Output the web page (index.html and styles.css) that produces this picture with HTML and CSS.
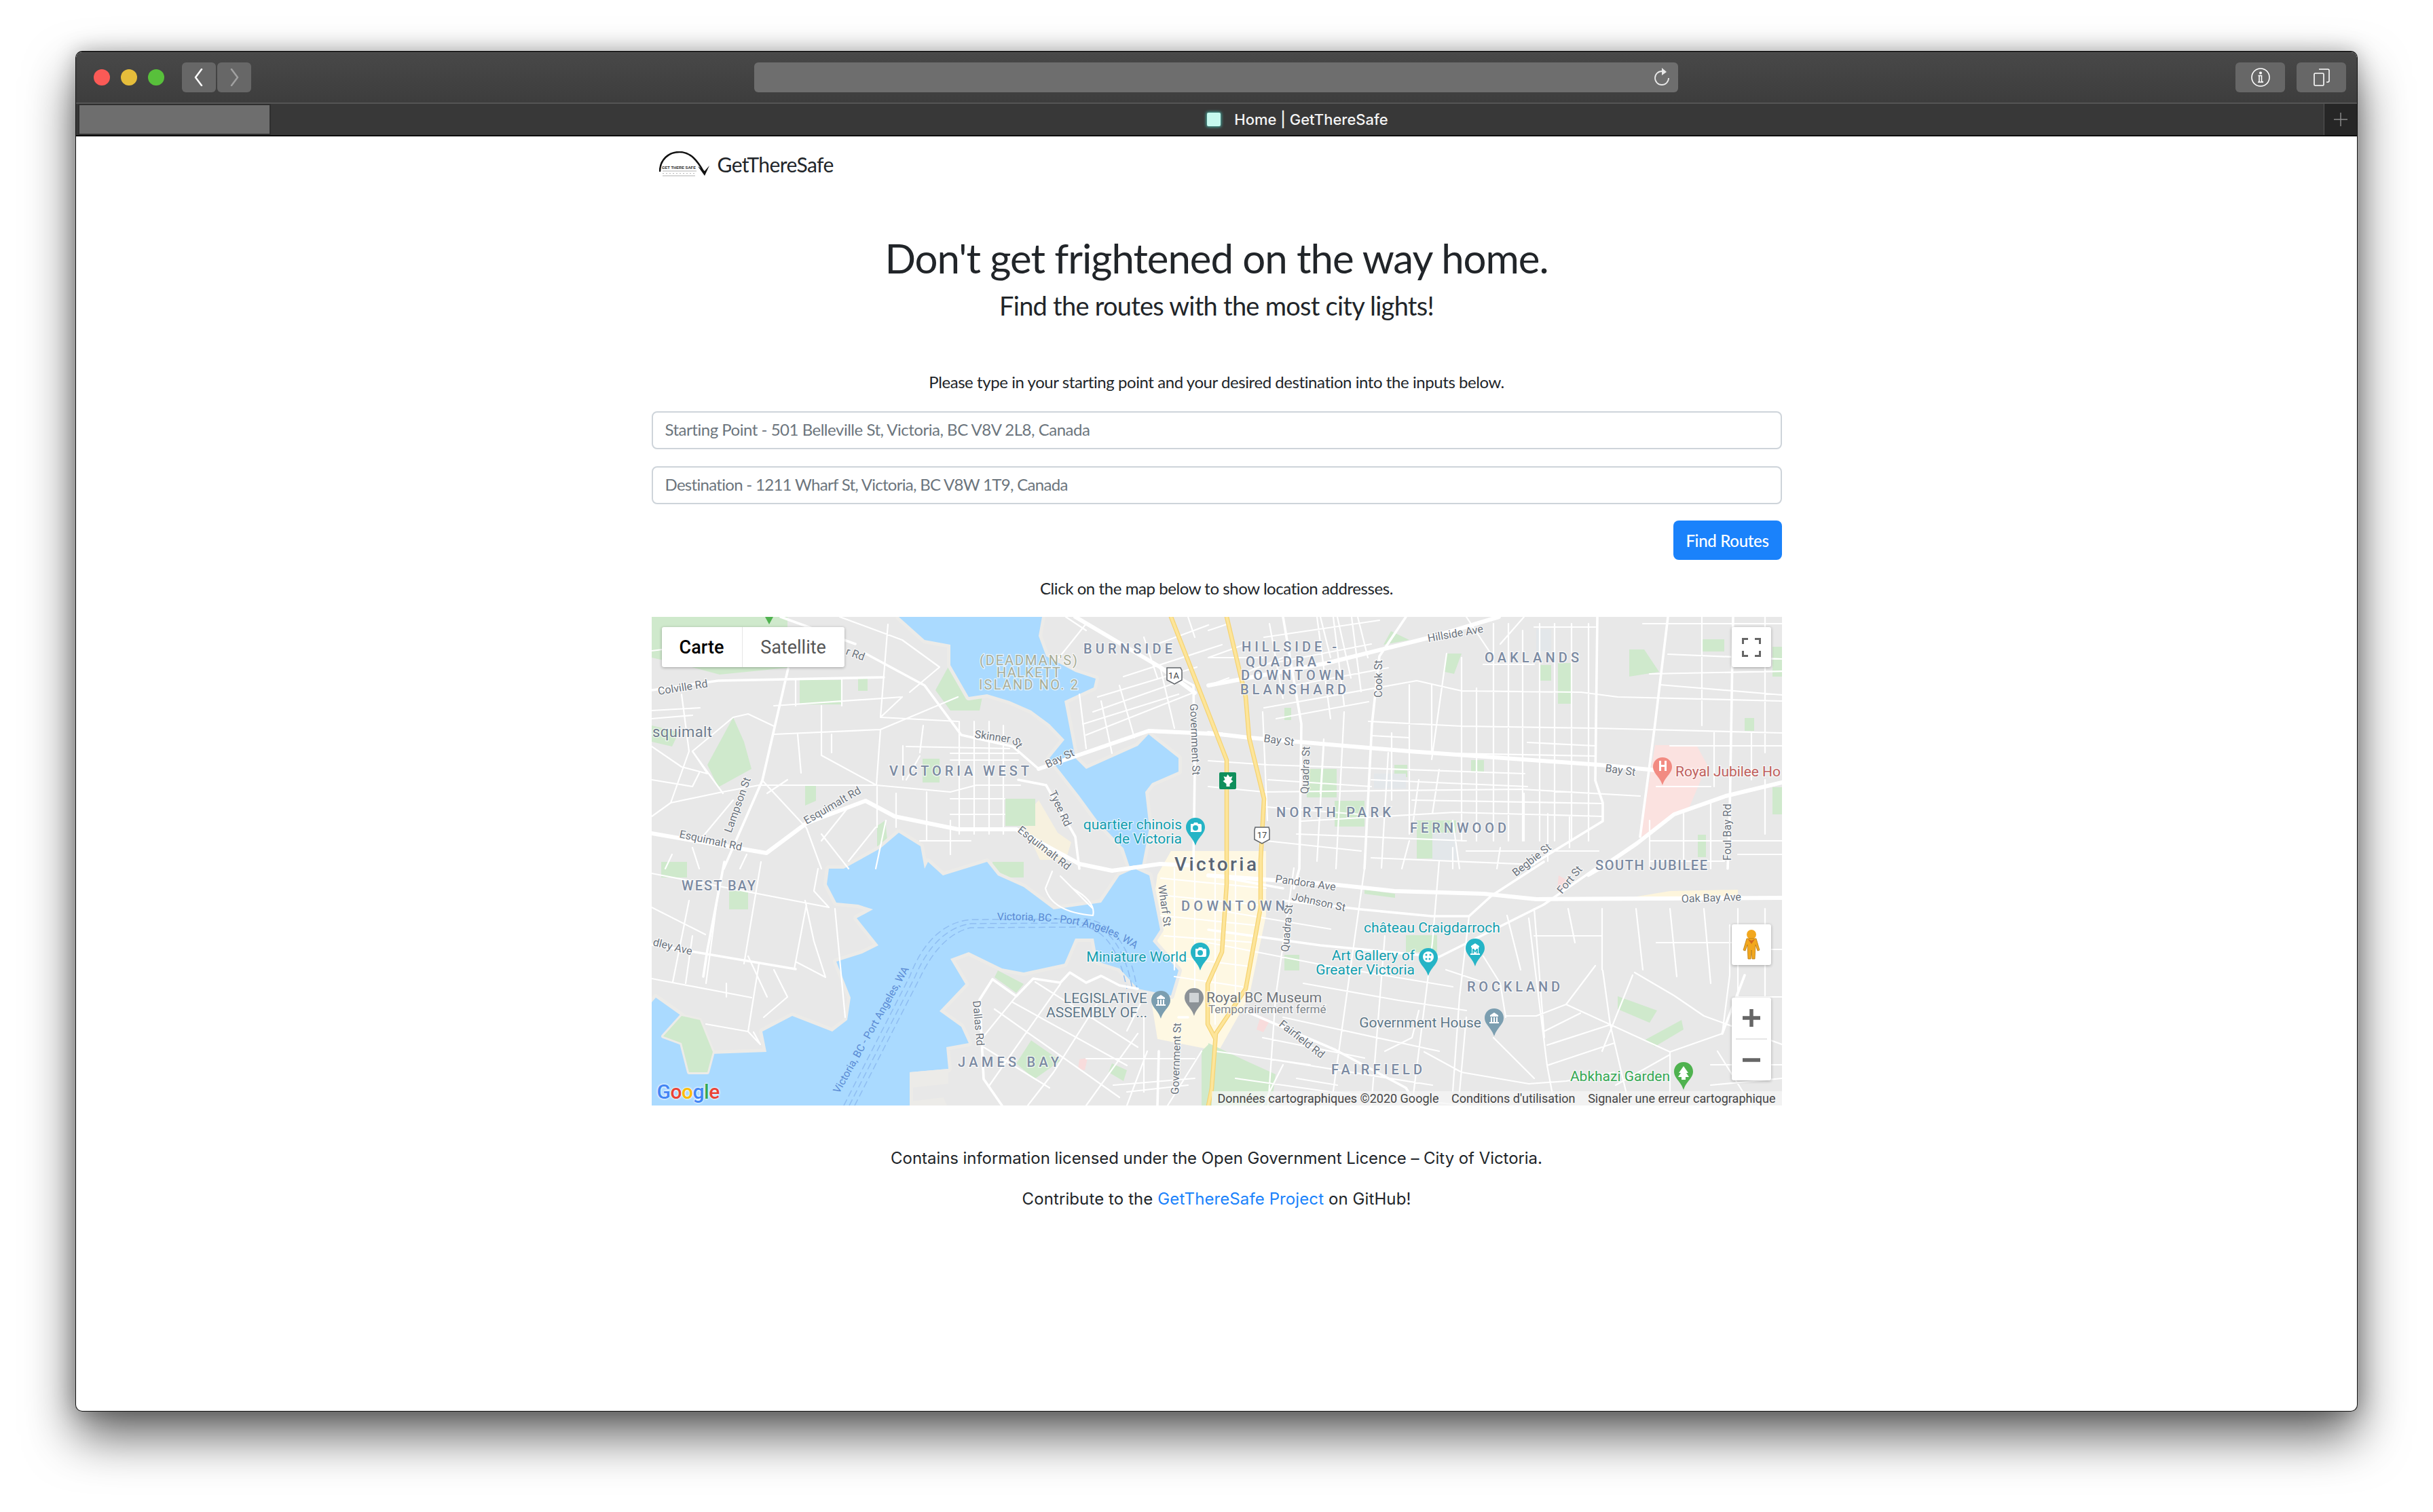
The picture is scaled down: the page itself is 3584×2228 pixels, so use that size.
FILE: index.html
```html
<!DOCTYPE html>
<html lang="en">
<head>
<meta charset="utf-8">
<title>Home | GetThereSafe</title>
<link rel="stylesheet" href="styles.css">
</head>
<body>
<div class="window">
  <header class="toolbar">
    <div class="lights"><i class="dot red"></i><i class="dot yellow"></i><i class="dot green"></i></div>
    <div class="navs">
      <div class="tbtn nav-btn"><svg width="20" height="26" viewBox="0 0 20 26"><path d="M14 1 5 13l9 12" class="chev"/></svg></div>
      <div class="tbtn nav-btn"><svg width="20" height="26" viewBox="0 0 20 26"><path d="M6 1l9 12-9 12" class="chev dim"/></svg></div>
    </div>
    <div class="tbtn url">
      <svg width="24" height="30" viewBox="0 0 24 30"><path d="M12 6a10 10 0 1 0 10 10" class="reload"/><path d="M12 1l7 6-7 5z" fill="#e8e8e8"/></svg>
    </div>
    <div class="tbtn side-btn first"><svg width="30" height="30" viewBox="0 0 30 30"><circle cx="15" cy="15" r="13" class="ico"/><circle cx="15" cy="8.500" r="2" fill="#fff"/><path d="M11.500 12.500h5v9h2.500M11 22h8M13 13v9" class="ico"/></svg></div>
    <div class="tbtn side-btn"><svg width="28" height="28" viewBox="0 0 28 28"><rect x="3" y="8" width="14" height="18" rx="1.500" class="ico"/><path d="M10 2h13q2 0 2 2v15q0 2-2 2h-2" class="ico"/></svg></div>
  </header>
  <div class="tabbar">
    <div class="tab-dim"></div>
    <div class="tab-active"><i class="favicon"></i><span>Home | GetThereSafe</span></div>
    <div class="tab-new"><svg width="20" height="20" viewBox="0 0 20 20"><path d="M10 0v20M0 10h20" stroke="#8a8a8a" stroke-width="1.500"/></svg></div>
  </div>

  <main class="page">
    <nav class="brand">
      <svg class="brand-logo" width="76" height="38" viewBox="0 0 76 38">
        <path d="M1 30C1 12 14 1 30 1c16 0 26 12 36 30" class="logo-arc"/>
        <path d="M57 22l10 14 7-15-7 8z" fill="#111"/>
        <text x="4" y="26" class="logo-text" textLength="50" lengthAdjust="spacingAndGlyphs">GET THERE SAFE</text>
        <path d="M5 29h50M5 36h48" stroke="#ccc" stroke-width="1.500"/>
        <path d="M5 32.500h50" stroke="#bbb" stroke-width="1" stroke-dasharray="2 3"/>
      </svg>
      <span class="brand-name">GetThereSafe</span>
    </nav>
    <h1 class="headline">Don't get frightened on the way home.</h1>
    <h2 class="subline">Find the routes with the most city lights!</h2>
    <p class="lead">Please type in your starting point and your desired destination into the inputs below.</p>
    <form class="route-form">
      <input class="field" type="text" placeholder="Starting Point - 501 Belleville St, Victoria, BC V8V 2L8, Canada">
      <input class="field field-tight" type="text" placeholder="Destination - 1211 Wharf St, Victoria, BC V8W 1T9, Canada">
      <button class="find" type="button">Find Routes</button>
    </form>
    <p class="hint">Click on the map below to show location addresses.</p>

    <section class="map">
      <svg class="map-art" width="1665" height="720" viewBox="0 0 1665 720">
        <defs>
          <symbol id="pin" viewBox="0 0 28 41"><path d="M14 0C6 0 0 6 0 14c0 10 10 14 14 27 4-13 14-17 14-27C28 6 22 0 14 0z"/></symbol>
        </defs>
        <rect width="1665" height="720" fill="#e8e8e8"/>

        <!-- downtown and pink areas -->
        <path d="M765 345H905V440L880 560 835 640 745 622 735 560 760 520 735 450 745 380z" fill="#fef8e3"/>
        <path d="M1478 189H1539L1555 218 1527 284 1500 294 1456 326z" fill="#fbe2e0"/>
        <path d="M418 0H462L445 30 425 34z" fill="#f8e0e0"/>
        <path d="M630 652l12-2-4 18-10-2zM897 588l14 6-10 18-10-4zM1336 381l14 8-8 16-8-4z" fill="#f8dcdc"/>
        <path d="M545 300l25-30 28 48 20 14-8 26-38 0z" fill="#fdf5dc" opacity=".7"/>
        <path d="M1440 414l60-10 100-2v8l-100 6-60 2z" fill="#fdf5dc"/>

        <!-- parks -->
        <g fill="#cfe9cc">
          <path d="M0 0H200V75L100 85 44 70 0 60z"/>
          <path d="M218 93h62v36h-62zM304 91h14v18h-14zM399 209h25v35h-25zM226 249h16v22l-16 7zM332 308l12-8 4 38h-16z"/>
          <path d="M120 148 82 218 98 251 147 224 136 184zM0 184l30 7 10-21-40-10z"/>
          <path d="M521 268 565 268 565 308 521 308zM418 108 440 68 489 108 483 138 440 138z"/>
          <path d="M1089 21 1116 34 1078 41zM1171 54h22l-11 30-14-3zM1308 71h17v23h-17zM1335 68h20v60h-20zM1440 48h22l22 33-44 7zM1547 33h33v18h-33zM1651 44h14v44h-14z"/>
          <path d="M965 224h44v42h-44zM1094 218h19v18h-19zM1207 211h19v17h-19zM1006 271h44v38h-44zM1127 300h58v56h-58zM1610 149h14v19h-14zM1651 251h14v40h-14zM1541 321h12v33h-12zM932 134h10v18h-10z"/>
          <path d="M1111 469h46v25h-46zM932 498h22v23h-22zM1423 559l58 21-11 18-47-20zM1462 624l55-30 3 14-42 25zM1050 402l45 6v6l-45-6z"/>
          <path d="M14 361h38v23H14zM114 404h28v27h-28zM502 361h46v23h-46zM510 521l38 20-11 13-32-23zM559 624l43 30-38 27-27-23zM678 658l22 10-5 16-22-13z"/>
          <path d="M820 628 875 654 919 674 913 720H820z"/>
          <path d="M810 640l10-10 4 90h-14z"/>
        </g>
        <path d="M1303 18h22v33h-22zM1064 231h47v22h-47zM1150 318h36v40h-36z" fill="#e3e7ea"/>

        <!-- water -->
        <g class="water">
          <path d="M364 0 402 34 440 41 440 71 467 118 494 114 527 124 559 138 586 158 608 181 586 208 602 228 630 264 657 301 695 341 705 371 722 368 733 311 727 258 737 245 776 228 776 208 738 178 732 173 716 190 640 224 624 208 619 181 608 124 651 104 654 91 624 81 581 58 570 28 575 0z"/>
          <path d="M283 371 337 341 364 318 396 338 402 371 407 361 429 381 494 361 510 381 548 398 592 431 662 421 689 381 711 371 733 381 749 461 738 478 776 521 765 558 716 548 689 518 657 508 651 474 624 474 608 511 548 524 516 518 467 494 440 504 462 541 424 581 456 604 467 628 434 634 437 666 380 671 380 720 275 720H0V568L6 561 44 588 88 644 169 641 163 611 207 588 266 611 288 594 293 561 272 508 310 496 334 484 302 444 326 431 304 424 272 421 258 394 261 371z"/>
        </g>
        <path class="cape" d="M44 588 71 594 90 641 82 671 55 671 44 628 17 618z"/>
        <path d="M380 671l57-5 0 22-57 6zM380 714l50-6 5 12h-55z" fill="#ecebe8"/>
        <path d="M283 720 380 530Q410 452 470 446L640 445Q700 455 715 548M291 720 388 530Q418 460 470 452L640 451Q692 461 708 548M299 720 396 530Q426 468 470 458L640 457Q684 467 700 548" class="ferry"/>

        <!-- minor roads -->
        <path class="r1" d="M277 0 369 34 424 74 380 111M348 11 337 148 369 118M180 131 369 118M180 173 337 166 451 118M337 166 331 248M250 131V204L331 248 440 258 478 248 543 248M158 248 331 248M375 191 527 194M453 154V320M475 154V320M497 154V320M518 160V320M440 201H540M440 211H540M440 268H520M440 291H520M337 148 451 154M0 138 71 134M0 150 60 145M44 114 55 198 28 274M0 191 44 221 82 231 60 198 120 148 142 143 180 161M28 274 104 258 158 248M163 241 228 311 250 371M0 294 28 274M212 131V91M280 131V91M395 205 375 240M332 250V310M360 260V310M405 258V330M0 50 80 40M440 300V350M395 330H470"/>
        <path class="r1" d="M0 240 60 250 70 230M60 198 105 260M120 270 70 330M170 260 200 240M30 350 20 371M60 340 70 371M140 350 130 371M250 320 290 371M290 280 250 330M330 310 290 360M345 300 330 371M215 173 220 230M265 173V200M370 190V240M400 160 395 200"/>
        <path class="r1" d="M635 158 776 114M640 174 797 112M650 140 781 94M657 118 803 74M695 88 840 41M745 40 820 12M630 114 640 194M662 124 678 201M689 101 711 178M749 74 770 164M725 30 745 90M790 0 800 30M600 60 640 10M640 20 610 0M820 101 850 90M820 60 870 42M820 20 850 10"/>
        <path class="r1" d="M902 134 1127 94 1193 109 1369 111 1423 118 1665 124M1056 154 1193 161 1390 164 1665 171M908 218 1286 231M902 258 1281 254 1456 264M957 301 1182 288 1401 294M820 60H900M820 212 908 218M820 250 902 258M880 80 930 60M985 0 1000 60M1010 0 1030 90M1040 0 1055 60M910 10 930 120M900 140 907 300M1116 100 1116 320M1149 100 1149 200M1193 60 1193 330M1215 105V330M1240 10V330M1262 10V330M1283 20V330M1308 10V330M1330 10V330M1355 10V330M1380 10V330M1171 54 1149 210M1200 0 1240 60M1225 70H1300M1300 15 1390 15M1460 10H1665M1497 55 1665 62M1485 100 1665 115M1670 80 1470 84M1547 0V160M1640 0V200M1500 190H1665M1620 170V240M1565 170V250M1640 240V320M1470 330H1665M1470 360H1580M1600 350H1665M1560 270V371M1520 290V371M1470 300V371M1480 250H1560M1285 0 1250 40M950 320 1200 330M1200 345H1395M1180 300 1190 371M1130 240 1122 300M1160 225 1150 290M1090 171V270M1020 140 1008 371M990 180 985 260M1285 260V330M1320 290V360M1352 295V340"/>
        <path class="r1" d="M902 30 1072 5M905 70 1060 40M950 100 1085 75M920 150 1056 125M980 0 1000 150M1004 0 1020 130M1031 0 1045 110M908 240 1060 250M1060 240 1290 250M905 280 1055 292M905 330 1045 345M1060 175 1116 178M990 190 980 360M1085 200 1075 370M1116 330 1105 371M1250 340 1245 371M1180 340V371M1120 270 1400 275M1290 185 1390 190M1120 200 1390 205M1060 355 1300 365"/>
        <path class="r1" d="M1050 371 1001 720M946 370 919 561 908 720M1160 360 1150 480 1120 720M1204 441 1190 560 1180 700M1292 444 1319 661 1330 720M1401 521 1412 601 1440 720M1390 514 1347 571 1303 588 1259 588M1347 571 1500 641V720M1500 641 1577 614 1588 528V454M1412 601 1319 631M1368 584 1314 611M1418 628 1319 661M1138 641 1193 671 1292 688 1347 684 1418 671M1448 524 1506 558 1550 588 1665 630M1445 528 1400 640M820 430 1000 460M820 480 1000 515 1180 545M960 540 1100 565 1200 580M930 590 1160 640M900 650 1150 690M900 620 1050 650M1000 700 1200 720M860 680 1000 700M1300 430 1315 620M1350 430 1360 480M1400 430V520M1450 430 1460 520M1500 430 1510 530M1550 430 1560 540M1600 430V620M1640 430V600M1300 470H1400M1480 480H1590M1620 490H1665M1600 560H1665M1570 640 1620 720M1560 660H1665M1560 690 1665 680M1200 590 1190 700M1420 690 1500 645M1225 500 1250 540 1258 590M1130 580 1120 620 1080 640M1080 470 1060 720M830 640 970 660M930 660 900 720M950 680 1010 690M1260 440 1280 520M1170 520 1230 540M1240 620 1300 680"/>
        <path class="r1" d="M565 538 716 634M532 568 700 661M505 578 689 708M489 634 586 694M537 559 489 618M602 541 548 618 497 691M662 561 592 671 554 720M716 614 640 720M730 640 700 720M640 651H800M680 690 800 680M700 610 720 570M810 640 760 720M700 700 790 690M725 590V700"/>
        <path class="r1" d="M0 428 79 468M0 533 147 561M55 418 31 538M228 424 210 519M161 361 136 511M0 378 261 428M245 371 239 404 261 428M212 508 256 531 239 478 226 418M158 511 142 611 160 630 150 612M60 470 50 540M100 390 80 540M0 483 59 494M110 540V560M270 430 285 590M180 520 200 560 165 590M142 500 170 560M80 600 142 611"/>
        <path class="r1" d="M750 385 905 400M750 410 900 425M750 440 895 455M755 470 890 480M760 500 880 515M770 530 870 545M770 370V520M800 370V560M830 370V600M860 370V560M590 375 580 400Q590 435 650 440 655 420 620 400M602 382 650 430"/>

        <!-- medium roads -->
        <path class="r2" d="M0 108 98 94 342 89M201 76 163 241 106 371M315 54 402 101 456 174 532 191 570 224M300 40 190 0M930 0 957 158 954 371 946 400M1111 0 1072 58 1061 158 1050 371M1393 0 1390 241 1401 274 1401 301 1347 334 1292 368M1497 0 1478 158 1456 324M1593 0 1588 291 1585 371M581 248 624 324 630 371M540 240 581 248M798 101 800 224 798 371M748 73 798 101M875 581 1007 638 1111 694 1127 720M107 361 82 491 76 530M0 483 212 519M820 380 930 400M502 534 537 559 562 533 602 539 616 524 640 539 662 529 689 543 716 548M502 534 483 564 489 681 516 720M930 418 1045 431 1149 441 1204 441 1237 411 1314 361M820 461 985 484 1160 501 1220 471 1314 424 1390 371M776 590 790 590M747 640 745 720M1610 528 1577 614"/>
        <!-- major roads -->
        <path class="r3" d="M570 224 732 168 840 173M820 171 880 178 1116 198 1396 218 1480 226M0 319 169 348 228 304 315 271 358 294 451 313 537 313 630 364 678 374 749 364 790 366M995 68 1144 31 1248 0M820 101 995 68M1665 244 1582 264 1506 291 1451 334 1401 368 1380 380M624 0 749 74 800 112M820 381 1001 394 1094 404 1226 408 1303 416 1665 414"/>
        <!-- highway -->
        <path class="h-edge" d="M765 0 847 211V324L847 394 840 494 819 541 819 600 830 621M847 0 875 118 880 178 902 268 897 358 897 428 875 548 831 614 825 695 820 720"/>
        <path class="h-core" d="M765 0 847 211V324L847 394 840 494 819 541 819 600 830 621M847 0 875 118 880 178 902 268 897 358 897 428 875 548 831 614 825 695 820 720"/>

        <!-- neighbourhood labels -->
        <text class="n" x="636" y="54" textLength="131">BURNSIDE</text>
        <text class="n brown" x="483" y="71" textLength="144">(DEADMAN'S)</text>
        <text class="n brown" x="508" y="89" textLength="94">HALKETT</text>
        <text class="n brown" x="482" y="107" textLength="146">ISLAND NO. 2</text>
        <text class="n" x="350" y="234" textLength="206">VICTORIA WEST</text>
        <text class="n" x="869" y="51" textLength="140">HILLSIDE -</text>
        <text class="n" x="875" y="73" textLength="126">QUADRA -</text>
        <text class="n" x="868" y="93" textLength="152">DOWNTOWN</text>
        <text class="n" x="867" y="114" textLength="156">BLANSHARD</text>
        <text class="n" x="1227" y="67" textLength="139">OAKLANDS</text>
        <text class="n" x="920" y="295" textLength="169">NORTH PARK</text>
        <text class="n" x="1117" y="318" textLength="142">FERNWOOD</text>
        <text class="n" x="1390" y="373" textLength="165">SOUTH JUBILEE</text>
        <text class="n" x="780" y="433" textLength="153">DOWNTOWN</text>
        <text class="n" x="1201" y="552" textLength="137">ROCKLAND</text>
        <text class="n" x="1001" y="674" textLength="134">FAIRFIELD</text>
        <text class="n" x="44" y="403" textLength="109">WEST BAY</text>
        <text class="n" x="451" y="663" textLength="149">JAMES BAY</text>
        <text class="city" x="770" y="374" textLength="121">Victoria</text>
        <text class="esq" x="1" y="177" textLength="88">squimalt</text>

        <!-- street labels -->
        <text class="s" x="10" y="115" transform="rotate(-9 10 115)">Colville Rd</text>
        <text class="s" x="285" y="55" transform="rotate(20 285 55)">r Rd</text>
        <text class="s" x="475" y="178" transform="rotate(8 475 178)">Skinner</text>
        <text class="s" x="530" y="183" transform="rotate(55 530 183)">St</text>
        <text class="s" x="583" y="223" transform="rotate(-25 583 223)">Bay St</text>
        <text class="s" x="793" y="128" transform="rotate(88 793 128)">Government St</text>
        <text class="s" x="585" y="259" transform="rotate(65 585 259)">Tyee Rd</text>
        <text class="s" x="228" y="306" transform="rotate(-30 228 306)">Esquimalt Rd</text>
        <text class="s" x="40" y="325" transform="rotate(12 40 325)">Esquimalt Rd</text>
        <text class="s" x="538" y="316" transform="rotate(38 538 316)">Esquimalt Rd</text>
        <text class="s" x="117" y="319" transform="rotate(-70 117 319)">Lampson St</text>
        <text class="s" x="1144" y="37" transform="rotate(-10 1144 37)">Hillside Ave</text>
        <text class="s" x="1076" y="119" transform="rotate(-90 1076 119)">Cook St</text>
        <text class="s" x="901" y="184" transform="rotate(8 901 184)">Bay St</text>
        <text class="s" x="1404" y="228" transform="rotate(8 1404 228)">Bay St</text>
        <text class="s" x="967" y="261" transform="rotate(-88 967 261)">Quadra St</text>
        <text class="s" x="1590" y="359" transform="rotate(-90 1590 359)">Foul Bay Rd</text>
        <text class="s" x="1273" y="383" transform="rotate(-38 1273 383)">Begbie St</text>
        <text class="s" x="1341" y="409" transform="rotate(-50 1341 409)">Fort St</text>
        <text class="s" x="1517" y="421" transform="rotate(-2 1517 421)">Oak Bay Ave</text>
        <text class="s" x="918" y="391" transform="rotate(8 918 391)">Pandora Ave</text>
        <text class="s" x="942" y="417" transform="rotate(12 942 417)">Johnson St</text>
        <text class="s" x="938" y="494" transform="rotate(-85 938 494)">Quadra St</text>
        <text class="s" x="746" y="396" transform="rotate(82 746 396)">Wharf St</text>
        <text class="s" x="923" y="602" transform="rotate(38 923 602)">Fairfield Rd</text>
        <text class="s" x="1" y="484" transform="rotate(14 1 484)">dley Ave</text>
        <text class="s" x="473" y="566" transform="rotate(85 473 566)">Dallas Rd</text>
        <text class="s" x="776" y="704" transform="rotate(-88 776 704)">Government St</text>
        <path id="ferryA" d="M509 447C590 446 660 450 712 490" fill="none"/>
        <path id="ferryB" d="M276 703 378 521" fill="none"/>
        <text class="fl"><textPath href="#ferryA">Victoria, BC - Port Angeles, WA</textPath></text>
        <text class="fl"><textPath href="#ferryB">Victoria, BC - Port Angeles, WA</textPath></text>

        <!-- shields -->
        <path d="M759 75h20l2 4v14l-11 6-11-6V79z" fill="#fff" stroke="#5f6368" stroke-width="1.500"/>
        <text class="shield" x="769" y="91">1A</text>
        <path d="M889 310h20l1 4v14l-11 6-11-6v-14z" fill="#fff" stroke="#5f6368" stroke-width="1.500"/>
        <text class="shield" x="899" y="326">17</text>
        <rect x="836" y="229" width="25" height="25" rx="2" fill="#0f8f5c"/>
        <path d="M848.500 232l3 4 4-1-2 5 3 2-5 4v4h-5v-4l-5-4 3-2-2-5 4 1z" fill="#fff"/>

        <!-- places -->
        <g class="poi teal">
          <text x="781" y="313" class="end">quartier chinois</text>
          <text x="781" y="334" class="end">de Victoria</text>
          <text x="788" y="508" class="end">Miniature World</text>
          <text x="1049" y="465">château Craigdarroch</text>
          <text x="1124" y="506" class="end">Art Gallery of</text>
          <text x="1124" y="527" class="end">Greater Victoria</text>
        </g>
        <g class="poi slate">
          <text x="730" y="569" class="end">LEGISLATIVE</text>
          <text x="730" y="590" class="end">ASSEMBLY OF...</text>
          <text x="1222" y="605" class="end">Government House</text>
          <text x="817" y="568" class="grey">Royal BC Museum</text>
        </g>
        <text class="poi-sub" x="820" y="584">Temporairement fermé</text>
        <text class="poi red-t" x="1508" y="235" textLength="155">Royal Jubilee Ho</text>
        <text class="poi green-t" x="1500" y="684" text-anchor="end">Abkhazi Garden</text>

        <use href="#pin" x="787" y="296" width="28" height="41" fill="#25b4c6"/>
        <use href="#pin" x="794" y="480" width="28" height="41" fill="#25b4c6"/>
        <use href="#pin" x="1130" y="488" width="28" height="41" fill="#25b4c6"/>
        <use href="#pin" x="1199" y="474" width="28" height="41" fill="#25b4c6"/>
        <use href="#pin" x="736" y="551" width="28" height="41" fill="#7b9eb0"/>
        <use href="#pin" x="785" y="547" width="28" height="41" fill="#8c9297"/>
        <use href="#pin" x="1227" y="577" width="28" height="41" fill="#7b9eb0"/>
        <use href="#pin" x="1475" y="207" width="28" height="41" fill="#f28b82"/>
        <use href="#pin" x="1506" y="656" width="28" height="41" fill="#4fb24f"/>
        <path d="M167 0h12l-6 11z" fill="#4fb24f"/>

        <!-- pin icons -->
        <g fill="#fff">
          <path d="M794 305h4l1-2h5l1 2h3q2 0 2 2v8q0 2-2 2h-14z"/>
          <path d="M801 489h4l1-2h5l1 2h3q2 0 2 2v8q0 2-2 2h-14z"/>
          <path d="M1207 485l6-4 6 4v2h-12zM1206 496h14v2h-14z"/>
          <path d="M1208 487h10v9h-10z"/>
          <path d="M744 561l6-4 6 4v2h-12zM743 571h14v2h-14zM745 564h2v7h-2zM749 564h2v7h-2zM753 564h2v7h-2z"/>
          <path d="M1235 587l6-4 6 4v2h-12zM1234 597h14v2h-14zM1236 590h2v7h-2zM1240 590h2v7h-2zM1244 590h2v7h-2z"/>
          <rect x="792" y="554" width="14" height="14" rx="1" fill="#cfd3d6"/>
          <path d="M1484 212h3v6h5v-6h3v15h-3v-6h-5v6h-3z"/>
          <path d="M1520 662l7 10h-3l4 6h-5v4h-6v-4h-5l4-6h-3z"/>
          <circle cx="1144" cy="501" r="8"/>
        </g>
        <g fill="#25b4c6">
          <circle cx="801" cy="311" r="4"/><circle cx="808" cy="495" r="4"/>
          <circle cx="1141" cy="498" r="1.500"/><circle cx="1147" cy="498" r="1.500"/><circle cx="1141" cy="504" r="1.500"/><circle cx="1146" cy="504" r="1.500"/>
          <path d="M1209 489h2l2 3 2-3h2v7h-2v-4l-2 3-2-3v4h-2z"/>
        </g>
      </svg>

      <div class="map-type">
        <span class="type-on">Carte</span>
        <span class="type-off">Satellite</span>
      </div>
      <button class="ctl fullscreen" type="button"><svg width="28" height="28" viewBox="0 0 28 28"><path d="M1 9V1h8M19 1h8v8M27 19v8h-8M9 27H1v-8" class="fs"/></svg></button>
      <div class="ctl pegman"><svg width="26" height="46" viewBox="0 0 26 46"><circle cx="13" cy="8" r="7" fill="#f2a71e"/><path d="M6 14h14l5 17-3 1-3-9-1 21h-4l-1-13-1 13H8L7 23l-3 9-3-1z" fill="#f2a71e" stroke="#b97a10" stroke-width=".8"/><path d="M8 15l5 7 5-7-5 2z" fill="#d2691e"/></svg></div>
      <div class="ctl zoombox">
        <div class="zoom-cell"><svg width="28" height="28" viewBox="0 0 28 28"><path d="M14 1v26M1 14h26" class="zm"/></svg></div>
        <i class="zoom-rule"></i>
        <div class="zoom-cell"><svg width="28" height="28" viewBox="0 0 28 28"><path d="M1 14h26" class="zm"/></svg></div>
      </div>
      <div class="glogo"><span class="gb">G</span><span class="gr">o</span><span class="gy">o</span><span class="gb">g</span><span class="gg">l</span><span class="gr">e</span></div>
      <div class="attrib">
        <span>Données cartographiques ©2020 Google</span>
        <span>Conditions d'utilisation</span>
        <span>Signaler une erreur cartographique</span>
      </div>
    </section>

    <p class="note first-note">Contains information licensed under the Open Government Licence – City of Victoria.</p>
    <p class="note second-note">Contribute to the <a href="#" class="link">GetThereSafe Project</a> on GitHub!</p>
  </main>
</div>
</body>
</html>
```

FILE: styles.css
```css
html, body { margin: 0; padding: 0; height: 2228px; overflow: hidden; background: #fff; }
* { box-sizing: border-box; }

.window {
  margin: 75px 0 0 111px;
  width: 3362px;
  height: 2005px;
  border-radius: 10px;
  border: 1px solid #111;
  border-top: 2px solid #1a1a1a;
  background: #fff;
  overflow: hidden;
  box-shadow: 0 36px 72px rgba(0, 0, 0, .62), 0 0 30px rgba(0, 0, 0, .25);
  position: relative;
}

/* Browser chrome */
.toolbar {
  height: 74px;
  display: flex;
  align-items: center;
  padding: 0 16px 1px 26px;
  background: linear-gradient(#484848, #3d3d3d);
  border-top: 1px solid #565656;
}
.lights { display: flex; gap: 16px; }
.dot { display: block; width: 24px; height: 24px; border-radius: 50%; }
.red { background: #fb5a56; }
.yellow { background: #e5bd3b; }
.green { background: #58c03b; }
.navs { display: flex; gap: 2px; margin-left: 26px; }
.tbtn {
  height: 44px;
  border-radius: 6px;
  background: #676767;
  display: flex;
  align-items: center;
  justify-content: center;
}
.nav-btn { width: 50px; }
.url { width: 1361px; margin-left: 741px; background: #6e6e6e; justify-content: flex-end; padding-right: 12px; }
.side-btn { width: 73px; margin-left: 17px; }
.side-btn.first { margin-left: auto; }
.chev { fill: none; stroke: #fff; stroke-width: 2.500; stroke-linecap: round; stroke-linejoin: round; }
.chev.dim { stroke: #a0a0a0; }
.reload { fill: none; stroke: #e8e8e8; stroke-width: 1.800; }
.ico { fill: none; stroke: #fff; stroke-width: 1.600; }

.tabbar {
  height: 50px;
  display: flex;
  background: #383838;
  border-top: 2px solid #555;
  border-bottom: 2px solid #0c0c0c;
}
.tab-dim {
  width: 280px;
  margin: 2px 3px 2px 5px;
  background: #6e6e6e;
  outline: 2px solid #2f2f2f;
}
.tab-active {
  flex: 1;
  display: flex;
  align-items: center;
  justify-content: center;
  gap: 20px;
  color: #f4f4f4;
  font: 500 22px Inter, "Liberation Sans", sans-serif;
}
.favicon { width: 20px; height: 20px; background: #c6f9ef; border-radius: 2px; box-shadow: 0 0 4px 1px #4bb5a8; }
.tab-new {
  width: 49px;
  background: #262626;
  border-left: 1px solid #555;
  display: flex;
  align-items: center;
  justify-content: center;
}

/* Page */
.page {
  width: 1665px;
  margin: 0 auto;
  font-family: Lato, "Liberation Sans", sans-serif;
  color: #212529;
}
.brand { display: flex; align-items: center; gap: 10px; padding: 22px 0 0 11px; height: 60px; }
.brand-name { font-size: 30px; letter-spacing: -.55px; color: #212529; line-height: 38px; }
.logo-arc { fill: none; stroke: #111; stroke-width: 2.500; }
.logo-text { font: 700 6px "Liberation Sans Narrow", "Liberation Sans", sans-serif; fill: #222; }

.headline { margin: 81px 0 0; font-size: 60px; font-weight: 400; line-height: 76px; text-align: center; letter-spacing: -1.050px; }
.subline { margin: 8px 0 0; font-size: 38px; font-weight: 400; line-height: 48px; text-align: center; letter-spacing: -.75px; }
.lead, .hint { margin: 0; font-size: 24px; line-height: 36px; text-align: center; letter-spacing: -.43px; color: #212529; }
.lead { margin-top: 71px; }
.route-form { margin-top: 25px; display: flex; flex-direction: column; gap: 25px; }
.field {
  display: block;
  width: 100%;
  height: 56px;
  border: 2px solid #ced4da;
  border-radius: 8px;
  padding: 0 18px 3px;
  font: 24px Lato, "Liberation Sans", sans-serif;
  letter-spacing: -.48px;
  color: #495057;
  background: #fff;
}
.field-tight { letter-spacing: -.7px; }
.field::placeholder { color: #6c757d; opacity: 1; }
.find {
  align-self: flex-end;
  margin-top: -1px;
  width: 160px;
  height: 58px;
  border: 0;
  border-radius: 8px;
  background: #1a82fb;
  color: #fff;
  font: 500 24px Lato, "Liberation Sans", sans-serif;
  letter-spacing: -.3px;
}
.hint { margin-top: 24px; }

/* Map */
.map { position: relative; margin-top: 24px; height: 720px; overflow: hidden; }
.map-art { display: block; }
.water path { fill: #aadaff; stroke: #ecebe8; stroke-width: 10; paint-order: stroke; stroke-linejoin: round; }
.cape { fill: #cfe9cc; stroke: #ecebe8; stroke-width: 6; paint-order: stroke; stroke-linejoin: round; }
.ferry { fill: none; stroke: #8fbdf2; stroke-width: 1.500; stroke-dasharray: 10 5; }
.r1, .r2, .r3, .h-edge, .h-core { fill: none; stroke-linejoin: round; stroke-linecap: round; }
.r1 { stroke: #fff; stroke-width: 2.200; }
.r2 { stroke: #fff; stroke-width: 3.600; }
.r3 { stroke: #fff; stroke-width: 6; }
.h-edge { stroke: #f5d372; stroke-width: 6.500; }
.h-core { stroke: #fde59a; stroke-width: 4; }

.n, .city, .esq, .s, .poi, .poi-sub, .fl {
  font-family: Roboto, "Liberation Sans", sans-serif;
  paint-order: stroke;
  stroke: rgba(255, 255, 255, .7);
  stroke-width: 2.500px;
}
.n { font-size: 20px; font-weight: 500; fill: #7b8aa2; }
.n.brown { fill: #a9ad96; font-weight: 400; }
.city { font-size: 28px; font-weight: 500; fill: #5a6675; }
.esq { font-size: 22px; fill: #6f7c8d; }
.s { font-size: 16px; fill: #6b737d; }
.fl { font-size: 15.500px; fill: #5a8bd4; stroke: none; }
.shield { font: 13px Roboto, sans-serif; fill: #444; text-anchor: middle; }
.poi { font-size: 21px; }
.poi .end { text-anchor: end; }
.teal text { fill: #129eaf; }
.slate text { fill: #5f7889; }
.slate text.grey { fill: #70757a; }
.poi-sub { font-size: 17px; fill: #80868b; }
.red-t { fill: #c0605c; }
.green-t { fill: #34a853; }

.map-type {
  position: absolute;
  left: 15px;
  top: 15px;
  height: 59px;
  display: flex;
  background: #fff;
  border-radius: 3px;
  box-shadow: 0 1px 4px rgba(0, 0, 0, .3);
  font: 27px Roboto, "Liberation Sans", sans-serif;
  align-items: stretch;
}
.map-type span { display: flex; align-items: center; justify-content: center; }
.type-on { width: 119px; color: #000; font-weight: 500; border-right: 1px solid #e6e6e6; }
.type-off { width: 150px; color: #565656; }
.ctl {
  position: absolute;
  left: 1591px;
  width: 58px;
  background: #fff;
  border: 0;
  padding: 0;
  border-radius: 3px;
  box-shadow: 0 1px 4px rgba(0, 0, 0, .3);
  display: flex;
  align-items: center;
  justify-content: center;
}
.fullscreen { top: 15px; height: 59px; }
.fs { fill: none; stroke: #666; stroke-width: 4; }
.pegman { top: 453px; height: 60px; }
.zoombox { top: 561px; height: 122px; flex-direction: column; }
.zoom-cell { height: 60px; display: flex; align-items: center; justify-content: center; }
.zoom-rule { width: 46px; height: 2px; background: #e6e6e6; }
.zm { fill: none; stroke: #666; stroke-width: 5.500; }
.glogo {
  position: absolute;
  left: 8px;
  bottom: 1px;
  font: 500 30px/38px Roboto, "Liberation Sans", sans-serif;
  letter-spacing: -.5px;
  text-shadow: 0 0 3px #fff, 0 0 3px #fff;
}
.gb { color: #4285f4; }
.gr { color: #ea4335; }
.gy { color: #fbbc05; }
.gg { color: #34a853; }
.attrib {
  position: absolute;
  right: 0;
  bottom: 0;
  height: 21px;
  width: 840px;
  padding: 0 9px;
  display: flex;
  justify-content: space-between;
  align-items: center;
  background: rgba(245, 245, 245, .75);
  font: 18px Roboto, "Liberation Sans", sans-serif;
  color: #444;
  white-space: nowrap;
}

.note { margin: 24px 0 0; font: 24px/36px Inter, "Liberation Sans", sans-serif; text-align: center; color: #212529; }
.first-note { margin-top: 60px; letter-spacing: -.05px; }
.second-note { letter-spacing: .1px; }
.link { color: #1a82fb; text-decoration: none; }
```
